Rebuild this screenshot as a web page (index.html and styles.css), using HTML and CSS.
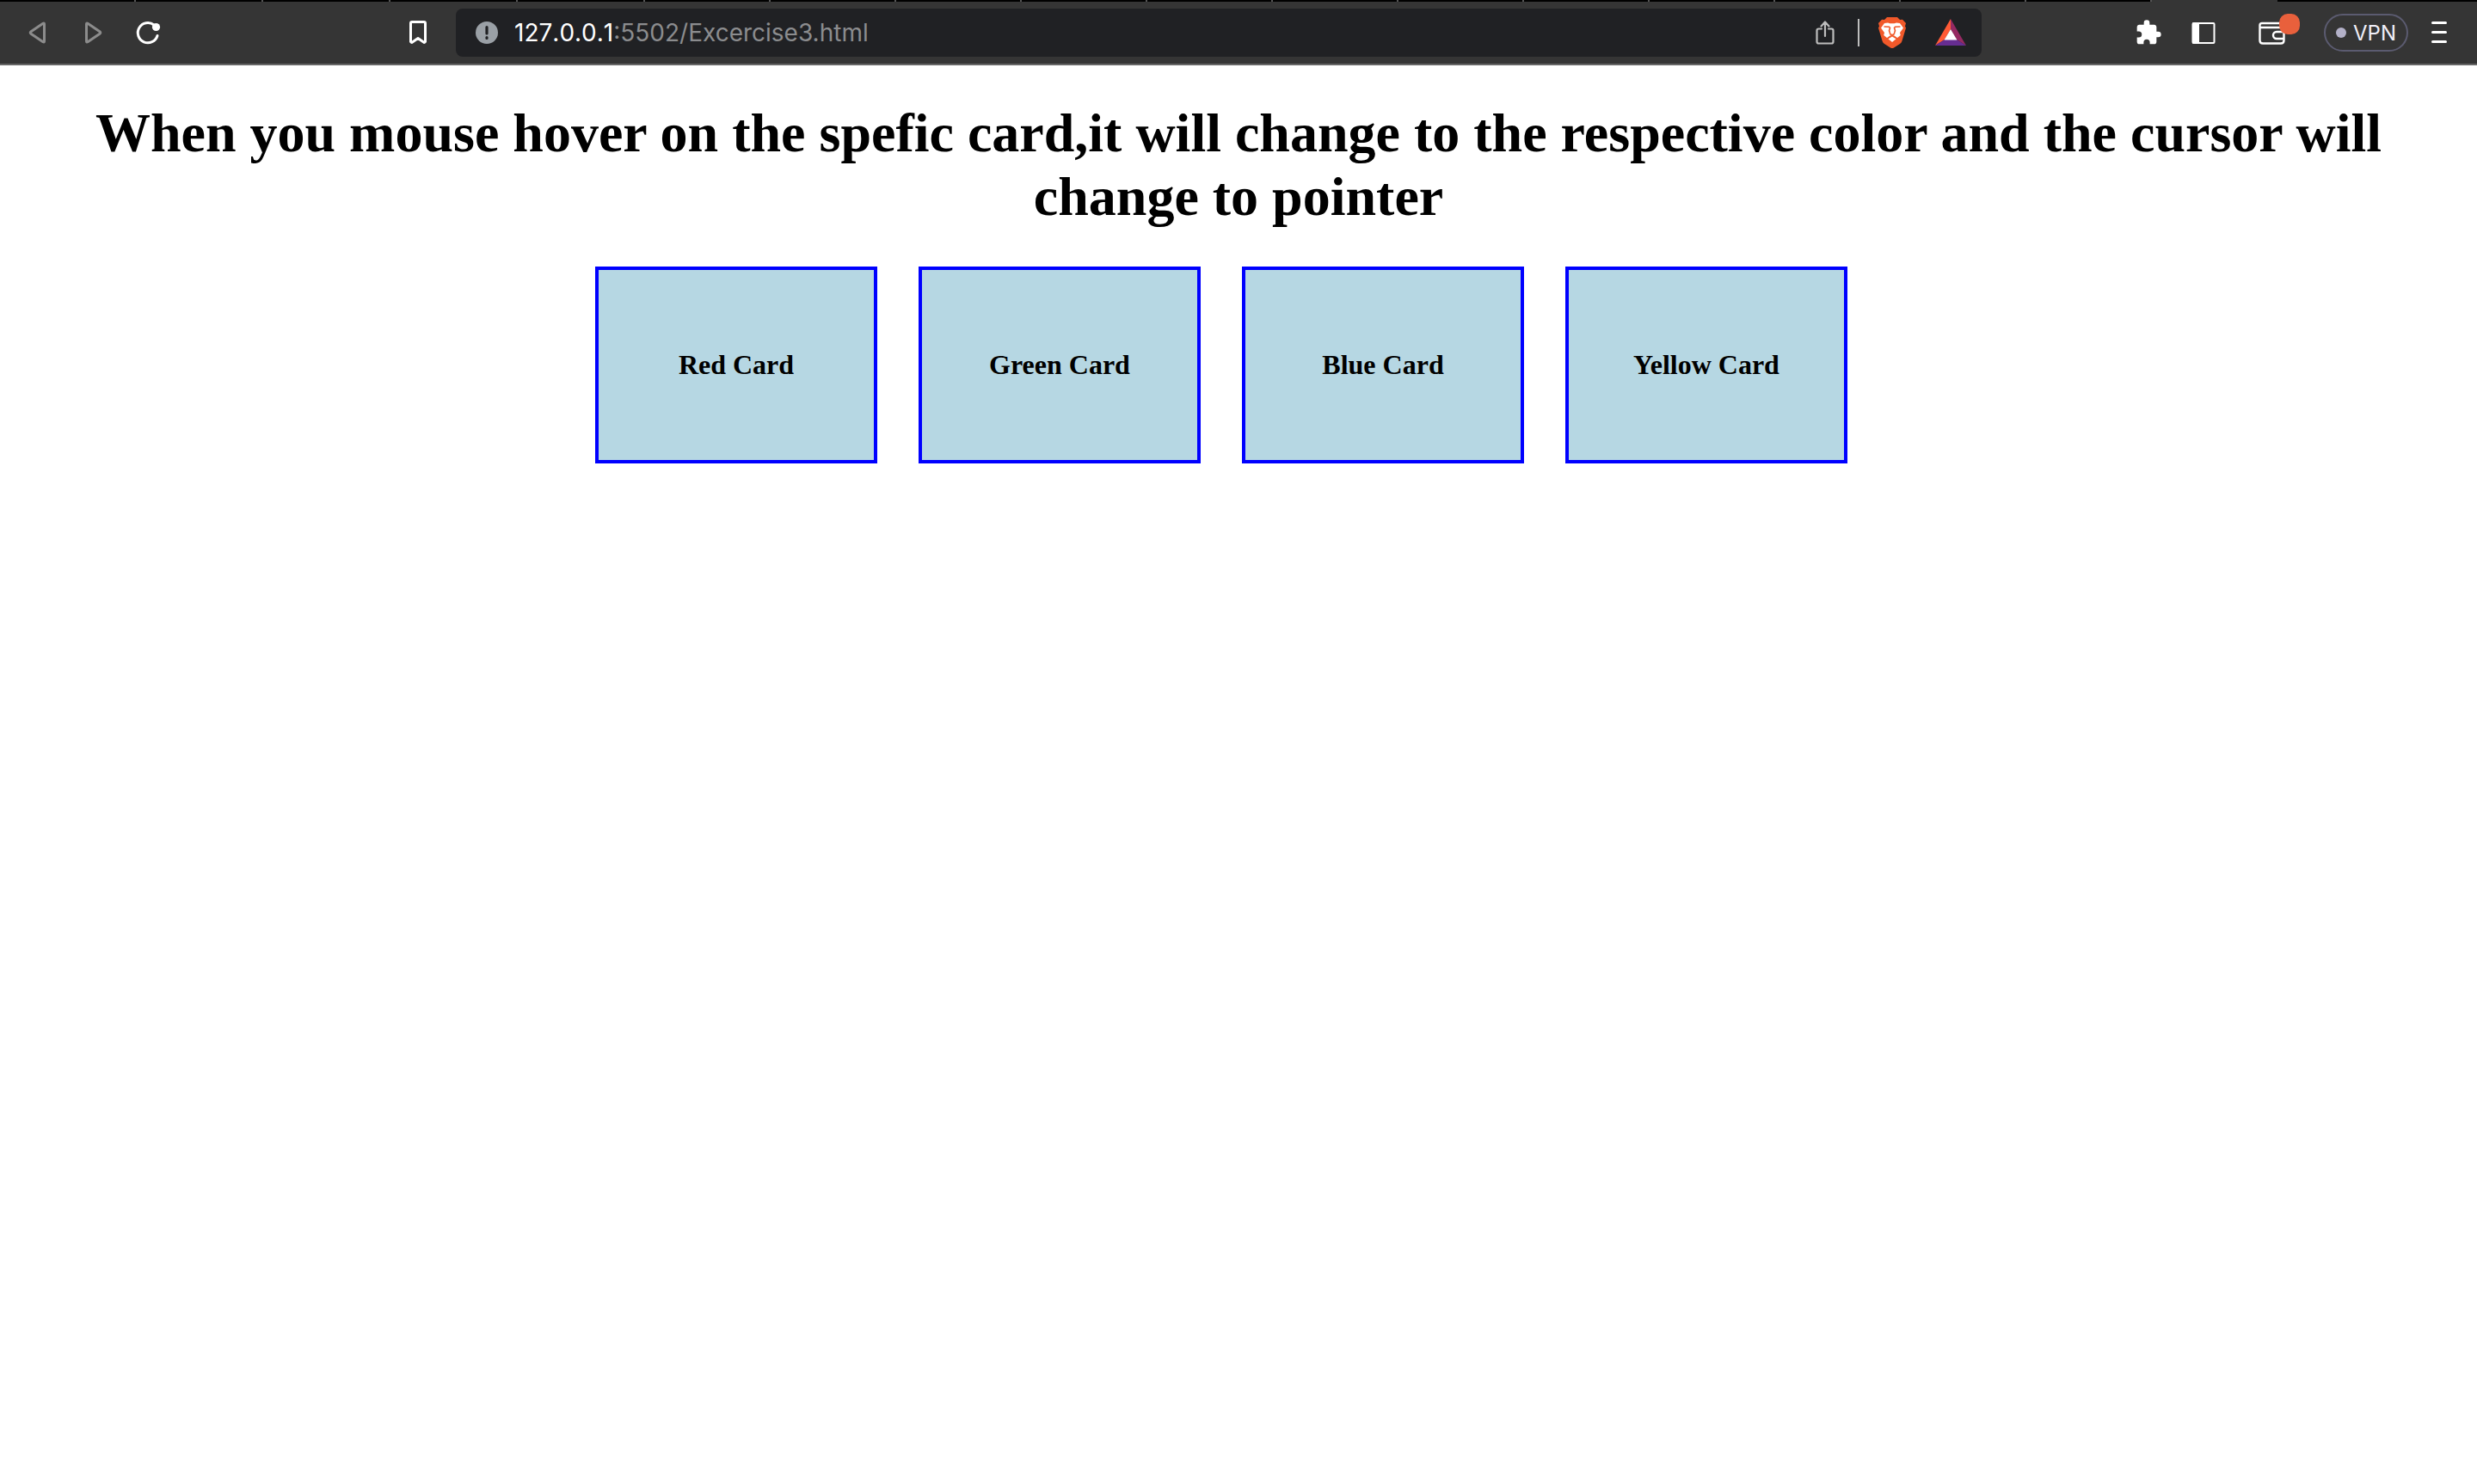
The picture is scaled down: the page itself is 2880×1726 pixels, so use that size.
FILE: index.html
```
<!DOCTYPE html>
<html lang="en">
<head>
<meta charset="utf-8">
<meta name="viewport" content="width=device-width, initial-scale=1">
<title>Excercise3</title>
<link rel="stylesheet" href="styles.css">
</head>
<body>
<header class="browser">
  <div class="tabstrip">
    <span class="tab tab-first"></span><span class="tab tab-wide"></span><span class="tab tab-wide"></span><span class="tab tab-wide"></span><span class="tab tab-wide"></span><span class="tab"></span><span class="tab"></span><span class="tab"></span><span class="tab"></span><span class="tab"></span><span class="tab"></span><span class="tab"></span><span class="tab"></span><span class="tab"></span><span class="tab"></span><span class="tab"></span><span class="tab"></span><span class="tab tab-active"></span>
  </div>
  <nav class="toolbar" aria-label="Browser toolbar">
    <div class="nav-buttons">
      <button class="icon-button" aria-label="Back"><svg width="32" height="32" viewBox="0 0 32 32"><path d="M23.500 6v20q0 1.500-1.500.7L8 17.200q-1.600-1.200 0-2.400L22 5.300q1.500-.8 1.500.7z" fill="none" stroke="#8c8c8c" stroke-width="3" stroke-linejoin="round"/></svg></button>
      <button class="icon-button" aria-label="Forward"><svg width="32" height="32" viewBox="0 0 32 32"><path d="M8.500 6v20q0 1.500 1.500.7l14-9.500q1.600-1.200 0-2.400L10 5.300q-1.500-.8-1.500.7z" fill="none" stroke="#8c8c8c" stroke-width="3" stroke-linejoin="round"/></svg></button>
      <button class="icon-button" aria-label="Reload"><svg width="32" height="32" viewBox="0 0 32 32"><path d="M27 19.500A11.600 11.600 0 1 1 23 7" fill="none" stroke="#fff" stroke-width="3" stroke-linecap="round"/><circle cx="25.500" cy="9.500" r="4.600" fill="#fff"/></svg></button>
    </div>
    <button class="icon-button bookmark" aria-label="Bookmark this page"><svg width="32" height="32" viewBox="0 0 32 32"><path d="M7.500 5q0-1.500 1.500-1.500h14q1.500 0 1.500 1.500v21.500q-1 1.500-2 .5L16 22.500 9.500 27q-1 1-2-.5z" fill="none" stroke="#fff" stroke-width="3" stroke-linejoin="round"/></svg></button>
    <div class="address">
      <svg width="32" height="32" viewBox="0 0 32 32"><circle cx="16" cy="16" r="13" fill="#9aa0a6"/><path d="M16 9.500v7.500M16 21.500v1" stroke="#202124" stroke-width="3.200" stroke-linecap="round"/></svg>
      <a class="url" href="#"><span class="host">127.0.0.1</span>:5502/Excercise3.html</a>
      <button class="icon-button" aria-label="Share"><svg width="32" height="32" viewBox="0 0 32 32"><path d="M12 11.500H8.500q-2 0-2 2v13q0 2 2 2h15q2 0 2-2v-13q0-2-2-2H20M16 20V4M11.500 8.500 16 3.500l4.500 5" fill="none" stroke="#bdbdbd" stroke-width="2.200" stroke-linecap="round" stroke-linejoin="round"/></svg></button>
      <span class="divider"></span>
      <button class="icon-button" aria-label="Brave Shields"><svg width="36" height="36" viewBox="0 0 36 36"><path d="M12 0h12l3 3 3-.2L34 7l-1 3.500 1 2-4.500 15q-.5 2-2.500 3.500L20 35.500q-2 1-4 0L9 31q-2-1.500-2.500-3.500L2 12.500l1-2L2 7l4-4.200 3 .2z" fill="#f1592a"/><path d="m9 7 4-.5 2.500.8h5l2.500-.8 4 .5 4 5.500-4 5.500.8 3L24 24l-3.500-2.500-2.500-.8-2.500.8L12 24l-3.800-3 .8-3-4-5.500z" fill="#fff"/><path d="m18 22.500-4.500 2.700L18 29l4.500-3.800z" fill="#fff"/><path d="m8.500 11 6 .3 1 1.200-1 3.300 1 2.700m12-7.500-6 .3-1 1.200 1 3.300-1 2.700m-5.500.5 3 2 3-2" fill="none" stroke="#f1592a" stroke-width="1.600"/></svg></button>
      <button class="icon-button rewards" aria-label="Brave Rewards"><svg width="36" height="36" viewBox="0 0 36 36"><path d="M18 2v12l-7 12L0 33z" fill="#ff5a36"/><path d="M18 2v12l7 12 11 7z" fill="#952a62"/><path d="m0 33 11-7h14l11 7z" fill="#662d91"/><path d="m18 14-7.500 12.500h15z" fill="#fff"/></svg></button>
    </div>
    <div class="actions">
      <button class="icon-button" aria-label="Extensions"><svg width="32" height="32" viewBox="0 0 24 24"><path d="M20.500 11H19V7c0-1.100-.9-2-2-2h-4V3.500a2.500 2.500 0 0 0-5 0V5H4c-1.100 0-2 .9-2 2v3.800h1.500a2.700 2.700 0 0 1 0 5.400H2V20c0 1.100.9 2 2 2h3.800v-1.500a2.700 2.700 0 0 1 5.400 0V22H17c1.100 0 2-.9 2-2v-4h1.500a2.500 2.500 0 0 0 0-5z" fill="#fff"/></svg></button>
      <button class="icon-button" aria-label="Sidebar"><svg width="32" height="32" viewBox="0 0 32 32"><rect x="3.500" y="5" width="25" height="23" rx="1" fill="none" stroke="#fff" stroke-width="2"/><path d="M3 4.500h8v24H3z" fill="#fff"/></svg></button>
      <button class="icon-button wallet" aria-label="Wallet"><svg width="32" height="32" viewBox="0 0 32 32"><path d="M28 5H4Q1.500 5 1.500 7.500V25Q1.500 28.500 5 28.500h21q3.500 0 3.500-3.500V13q0-3-3-3H2M30 15h-9a4 4 0 0 0 0 8h9" fill="none" stroke="#fff" stroke-width="2.400"/></svg><span class="badge"></span></button>
      <button class="vpn"><span class="vpn-dot"></span>VPN</button>
      <button class="icon-button menu" aria-label="Menu"><svg width="32" height="32" viewBox="0 0 32 32"><path d="M8.500 4.500h15M8.500 15.500h15M8.500 26.500h15" stroke="#fff" stroke-width="3" stroke-linecap="round"/></svg></button>
    </div>
  </nav>
</header>
<main class="page">
  <h1 class="title">When you mouse hover on the spefic card,it will change to the respective color and the cursor will change to pointer</h1>
  <div class="cards">
    <div class="card card-red">Red Card</div>
    <div class="card card-green">Green Card</div>
    <div class="card card-blue">Blue Card</div>
    <div class="card card-yellow">Yellow Card</div>
  </div>
</main>
</body>
</html>
```
FILE: styles.css
```
* {
  box-sizing: border-box;
}

body {
  margin: 0;
  background: #fff;
  color: #000;
  font-family: "Liberation Serif", "Times New Roman", serif;
}

button {
  margin: 0;
  padding: 0;
  border: 0;
  background: none;
  color: inherit;
  font: inherit;
  cursor: pointer;
}

svg {
  display: block;
}

.browser {
  background: #353535;
  border-bottom: 2px solid #666;
  font-family: Inter, "Liberation Sans", sans-serif;
}

.tabstrip {
  display: flex;
  height: 2px;
  overflow: hidden;
  background: #000;
}

.tab {
  flex: none;
  width: 146px;
  border-right: 2px solid #555;
}

.tab-first {
  width: 158px;
}

.tab-wide {
  width: 148px;
}

.tab-active {
  background: #353535;
  border: 0;
}

.toolbar {
  display: flex;
  align-items: center;
  height: 72px;
  padding: 0 28px;
}

.icon-button {
  flex: none;
}

.nav-buttons {
  display: flex;
  gap: 32px;
}

.bookmark {
  margin-left: 282px;
}

.address {
  display: flex;
  flex: 1;
  align-items: center;
  height: 56px;
  margin: 0 178px 0 28px;
  padding: 0 18px 0 20px;
  border-radius: 8px;
  background: #202124;
}

.url {
  flex: 1;
  margin-left: 16px;
  color: #8b8c8e;
  font-size: 28px;
  text-decoration: none;
}

.host {
  color: #fff;
  font-kerning: none;
}

.divider {
  width: 2px;
  height: 32px;
  margin: 0 20px 0 22px;
  background: #bdbdbd;
}

.rewards {
  margin-left: 32px;
}

.actions {
  display: flex;
  align-items: center;
  gap: 32px;
}

.wallet {
  position: relative;
  margin-left: 16px;
}

.badge {
  position: absolute;
  top: -6px;
  right: -16px;
  width: 24px;
  height: 24px;
  border-radius: 10px;
  background: #e9603c;
}

.vpn {
  display: flex;
  align-items: center;
  justify-content: center;
  gap: 8px;
  width: 98px;
  height: 44px;
  margin-left: 12px;
  border: 2px solid #5b5b70;
  border-radius: 22px;
  color: #f0eff8;
  font-size: 24px;
}

.vpn-dot {
  width: 12px;
  height: 12px;
  border-radius: 50%;
  background: #b3b1c8;
}

.menu {
  margin-left: -12px;
}

.page {
  padding: 42px 16px;
}

.title {
  margin: 0 0 44px;
  font-size: 64px;
  line-height: 74px;
  text-align: center;
}

.cards {
  display: flex;
  justify-content: center;
  gap: 48px;
  padding-right: 40px;
}

.card {
  display: flex;
  align-items: center;
  justify-content: center;
  width: 328px;
  height: 229px;
  border: 4px solid #00f;
  background: #b6d7e3;
  font-size: 32px;
  font-weight: bold;
  cursor: pointer;
}

.card-red:hover {
  background: red;
}

.card-green:hover {
  background: green;
}

.card-blue:hover {
  background: blue;
}

.card-yellow:hover {
  background: yellow;
}
```
